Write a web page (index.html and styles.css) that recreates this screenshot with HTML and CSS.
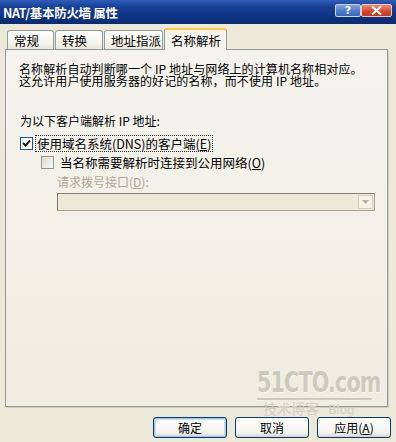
FILE: index.html
```html
<!DOCTYPE html>
<html lang="zh-CN">
<head>
    <meta charset="UTF-8">
    <title>NAT/基本防火墙 属性</title>
    <link rel="stylesheet" href="styles.css">
</head>
<body>

<div class="window">
    <div class="titlebar">
        <span class="title">NAT/基本防火墙 属性</span>
        <div class="caption-btns">
            <div class="cap-btn help">?</div>
            <div class="cap-btn close">
                <svg width="11" height="9" viewBox="0 0 11 9"><path d="M1 0.5 L10 8.5 M10 0.5 L1 8.5" stroke="#fff" stroke-width="2"/></svg>
            </div>
        </div>
    </div>

    <div class="tabs">
        <div class="tab">常规</div>
        <div class="tab">转换</div>
        <div class="tab">地址指派</div>
        <div class="tab active">名称解析</div>
    </div>

    <div class="panel">
        <div class="desc">名称解析自动判断哪一个 IP 地址与网络上的计算机名称相对应。</div>
        <div class="desc">这允许用户使用服务器的好记的名称，而不使用 IP 地址。</div>

        <p class="section">为以下客户端解析 IP 地址:</p>

        <div class="check-row">
            <span class="checkbox checked">
                <svg width="9" height="9" viewBox="0 0 9 9"><path d="M1 4 L3.5 6.5 L8 1.5" stroke="#1a1a1a" stroke-width="2" fill="none"/></svg>
            </span>
            <span class="check-label focus">使用域名系统(DNS)的客户端(<u>E</u>)</span>
        </div>

        <div class="check-row sub">
            <span class="checkbox off"></span>
            <span class="check-label">当名称需要解析时连接到公用网络(<u>O</u>)</span>
        </div>

        <div class="combo-group">
            <div class="combo-label">请求拨号接口(<u>D</u>):</div>
            <div class="combo">
                <div class="combo-btn">
                    <svg width="7" height="4" viewBox="0 0 7 4"><path d="M0 0 H7 L3.5 4 Z" fill="#b5b2a6"/></svg>
                </div>
            </div>
        </div>
    </div>

    <div class="watermark">
        <div class="wm-big">51CTO.com</div>
        <div class="wm-small">技术博客 <span>Blog</span></div>
    </div>

    <div class="footer">
        <button class="btn default">确定</button>
        <button class="btn">取消</button>
        <button class="btn">应用(<u>A</u>)</button>
    </div>
</div>

</body>
</html>
```

FILE: styles.css
```css
body {
    margin: 0;
    background-color: #ECE9D8;
    font-family: "Noto Sans CJK SC", "DejaVu Sans", sans-serif;
    font-size: 12px;
    color: #000;
}
.window {
    position: relative;
    width: 396px;
    height: 442px;
    overflow: hidden;
    background-color: #ECE9D8;
}
.titlebar {
    height: 24px;
    display: flex;
    align-items: center;
    justify-content: space-between;
    background: linear-gradient(#2d5cb8, #163f94 30%, #0d3283 70%, #0a2b72);
}
.title {
    color: #fff;
    font-weight: bold;
    font-size: 12.5px;
    padding-left: 3px;
    letter-spacing: -0.3px;
}
.caption-btns {
    display: flex;
    padding-right: 4px;
    align-self: flex-start;
    margin-top: 4px;
}
.cap-btn {
    height: 13px;
    display: flex;
    align-items: center;
    justify-content: center;
    border-radius: 2px;
    box-sizing: border-box;
}
.help {
    width: 26px;
    background: linear-gradient(#7ea5e6, #4d78c8 60%, #3a66b8);
    border: 1px solid #c7d6f2;
    color: #fff;
    font-weight: bold;
    font-size: 11px;
    font-family: "DejaVu Sans", sans-serif;
}
.close {
    width: 31px;
    background: linear-gradient(#e98a73, #d2492d 60%, #c33a20);
    border: 1px solid #f2c5b8;
}
.tabs {
    display: flex;
    align-items: flex-end;
    padding-left: 7px;
    margin-top: 4px;
    height: 21px;
    gap: 1px;
}
.tab {
    height: 19px;
    box-sizing: border-box;
    padding: 0 0 0 6px;
    white-space: nowrap;
    border: 1px solid #919b9c;
    border-bottom: none;
    border-radius: 3px 3px 0 0;
    background: linear-gradient(#ffffff, #f3f2ec 70%, #e8e6dc);
    display: flex;
    align-items: center;
    font-size: 12.5px;
}
.tab:nth-child(1) { width: 47px; }
.tab:nth-child(2) { width: 48px; }
.tab:nth-child(3) { width: 59px; }
.tab.active {
    width: 63px;
    height: 22px;
    background: #f4f3ee;
    border-top: 2px solid #ffc83c;
    position: relative;
    top: 1px;
    z-index: 1;
}
.panel {
    margin: 0 8px 0 5px;
    height: 358px;
    box-sizing: border-box;
    border: 1px solid #919b9c;
    background: linear-gradient(#f4f3ee, #efede2);
    padding: 13px 0 0 13px;
    box-shadow: 1px 1px 0 #d0cdc0;
}
.desc {
    line-height: 12px;
    font-size: 12px;
    letter-spacing: 0.1px;
    white-space: nowrap;
}
.section {
    margin: 28px 0 0 1px;
    line-height: 12px;
}
.check-row {
    display: flex;
    align-items: center;
    margin-top: 9px;
    gap: 3px;
}
.check-row.sub {
    margin-top: 4px;
    margin-left: 21px;
    gap: 5px;
}
.checkbox {
    width: 13px;
    height: 13px;
    box-sizing: border-box;
    display: flex;
    align-items: center;
    justify-content: center;
    margin-left: 1px;
}
.checkbox.checked {
    border: 1px solid #1c5180;
    background: #fff;
}
.checkbox.off {
    border: 1px solid #9a988c;
    background: linear-gradient(135deg, #dcdad0, #fbfbf8);
}
.check-label {
    line-height: 15px;
    padding: 0 1px;
    font-size: 12.5px;
}
.check-label.focus {
    outline: 1px dotted #333;
    outline-offset: 0;
}
.combo-group {
    margin-left: 38px;
}
.combo-label {
    color: #aca899;
    margin-top: 6px;
    line-height: 12px;
    font-size: 12px;
}
.combo {
    margin-top: 5px;
    width: 318px;
    height: 18px;
    box-sizing: border-box;
    border: 1px solid #a5a292;
    border-top-color: #7f7d72;
    border-left-color: #7f7d72;
    background: #ECE9D8;
    display: flex;
    justify-content: flex-end;
    align-items: center;
    padding-right: 1px;
}
.combo-btn {
    width: 15px;
    height: 14px;
    box-sizing: border-box;
    border: 1px solid #d2cfc1;
    background: #f3f1e8;
    display: flex;
    align-items: center;
    justify-content: center;
}
.watermark {
    position: absolute;
    left: 257px;
    top: 368px;
    width: 120px;
    pointer-events: none;
}
.wm-big {
    font-family: "DejaVu Sans Condensed", "DejaVu Sans", sans-serif;
    font-weight: bold;
    font-size: 28px;
    line-height: 30px;
    color: #cdcabd;
    letter-spacing: -1px;
    text-shadow: 1px 1px 0 #f6f5ef;
    transform: scaleX(0.82);
    transform-origin: left;
    border-bottom: 2px solid #cdcabd;
    width: 140px;
}
.wm-small {
    font-size: 14px;
    color: #d2cfc2;
    line-height: 17px;
    margin-left: 6px;
}
.wm-small span {
    font-family: "DejaVu Sans", sans-serif;
    font-size: 12px;
    margin-left: 6px;
}
.footer {
    position: relative;
    display: flex;
    justify-content: flex-end;
    gap: 8px;
    padding-right: 5px;
    margin-top: 10px;
}
.btn {
    width: 74px;
    height: 21px;
    font-family: "Noto Sans CJK SC", sans-serif;
    font-size: 12px;
    border: 1px solid #003c74;
    border-radius: 3px;
    background: linear-gradient(#ffffff, #f3f2ec 80%, #d6d0c5);
    color: #000;
    padding: 0;
    line-height: 17px;
}
.btn.default {
    box-shadow: inset 0 0 0 1px #a8c6ee, inset 0 0 0 2px #c9dcf6;
}
```
